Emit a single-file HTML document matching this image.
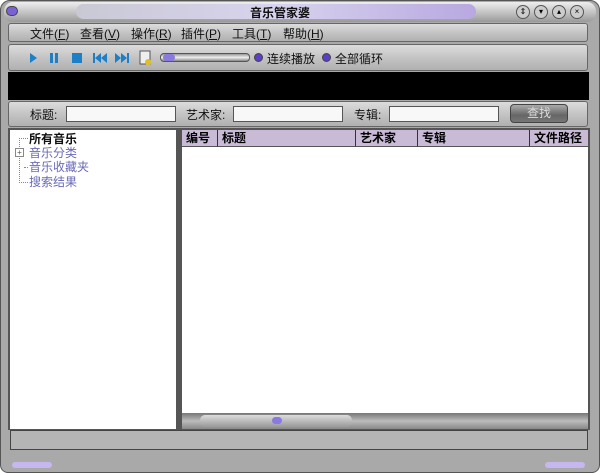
<!DOCTYPE html>
<html><head><meta charset="utf-8"><style>
*{margin:0;padding:0;box-sizing:border-box}
body{width:600px;height:473px;background:#fff;font-family:"Liberation Sans","Noto Sans CJK SC",sans-serif;font-size:12px;position:relative;overflow:hidden}
.a{position:absolute}
.win{left:0;top:0;width:600px;height:473px;background:#a9a9a9;border:1px solid #555;border-radius:10px 10px 8px 8px}
.bar{background:linear-gradient(#dcdcdc,#c4c4c4 50%,#b0b0b0);border:1px solid #666;border-radius:3px}
.inp{background:#f8f8f8;border:1px solid #555;height:16px}
.t{color:#111;font-size:12px;white-space:nowrap;line-height:14px}
.hd{background:#c9bad6;border-right:1px solid #333;border-bottom:1px solid #555;height:17px;font-weight:bold;padding-left:4px;font-size:12px;line-height:17px}
.lv{color:#6a6ab8}
</style></head><body>
<div class="a win"></div>
<div class="a" style="left:4px;top:2px;width:592px;height:20px;border-radius:9px;background:linear-gradient(#eee,#bdbdbd 60%,#999)"></div>
<div class="a" style="left:76px;top:4px;width:400px;height:15px;border-radius:8px;background:linear-gradient(90deg,#c9c9d4,#d8d3ee 50%,#b8a8e0)"></div>
<div class="a" style="left:6px;top:6px;width:12px;height:10px;border-radius:6px;background:#7a62d6;border:1px solid #444"></div>
<div class="a t" style="left:250px;top:6px;font-weight:bold">音乐管家婆</div>
<div class="a" style="left:516px;top:5px;width:76px;height:14px;display:flex;gap:4px">
<span style="width:14px;height:14px;border-radius:7px;background:#ccc;border:1px solid #555;font-size:8px;text-align:center;line-height:12px">⇕</span><span style="width:14px;height:14px;border-radius:7px;background:#ccc;border:1px solid #555;font-size:8px;text-align:center;line-height:12px">▾</span><span style="width:14px;height:14px;border-radius:7px;background:#ccc;border:1px solid #555;font-size:8px;text-align:center;line-height:12px">▴</span><span style="width:14px;height:14px;border-radius:7px;background:#ccc;border:1px solid #555;font-size:8px;text-align:center;line-height:12px">×</span></div>
<div class="a bar" style="left:8px;top:23px;width:580px;height:19px"></div>
<div class="a t" style="left:30px;top:27px">文件(<u>F</u>)</div>
<div class="a t" style="left:80px;top:27px">查看(<u>V</u>)</div>
<div class="a t" style="left:131px;top:27px">操作(<u>R</u>)</div>
<div class="a t" style="left:181px;top:27px">插件(<u>P</u>)</div>
<div class="a t" style="left:232px;top:27px">工具(<u>T</u>)</div>
<div class="a t" style="left:283px;top:27px">帮助(<u>H</u>)</div>
<div class="a bar" style="left:8px;top:44px;width:580px;height:27px"></div>
<svg class="a" style="left:26px;top:50px" width="150" height="16" fill="#1d7fc6">
<path d="M4 3 L11 8 L4 13Z"/>
<rect x="24" y="3" width="3" height="10"/><rect x="29" y="3" width="3" height="10"/>
<rect x="46" y="3" width="10" height="10"/>
<rect x="67" y="3" width="2" height="10"/><path d="M75 3 L69 8 L75 13Z M81 3 L75 8 L81 13Z"/>
<path d="M89 3 L95 8 L89 13Z M95 3 L101 8 L95 13Z"/><rect x="101" y="3" width="2" height="10"/>
<rect x="114" y="1" width="10" height="13" fill="#eee" stroke="#555"/><circle cx="122" cy="12" r="3" fill="#e0c020"/>
</svg>
<div class="a" style="left:160px;top:53px;width:90px;height:9px;background:linear-gradient(#999,#eee,#888);border:1px solid #555;border-radius:4px"></div>
<div class="a" style="left:163px;top:54px;width:12px;height:7px;background:#8b78e0;border-radius:4px"></div>
<div class="a" style="left:254px;top:53px;width:9px;height:9px;border-radius:5px;background:#5b3fc8;border:1px solid #444"></div>
<div class="a t" style="left:267px;top:52px">连续播放</div>
<div class="a" style="left:322px;top:53px;width:9px;height:9px;border-radius:5px;background:#5b3fc8;border:1px solid #444"></div>
<div class="a t" style="left:335px;top:52px">全部循环</div>
<div class="a" style="left:8px;top:72px;width:581px;height:28px;background:#000"></div>
<div class="a bar" style="left:8px;top:101px;width:580px;height:26px"></div>
<div class="a t" style="left:30px;top:108px">标题:</div>
<div class="a inp" style="left:66px;top:106px;width:110px"></div>
<div class="a t" style="left:186px;top:108px">艺术家:</div>
<div class="a inp" style="left:233px;top:106px;width:110px"></div>
<div class="a t" style="left:354px;top:108px">专辑:</div>
<div class="a inp" style="left:389px;top:106px;width:110px"></div>
<div class="a" style="left:510px;top:104px;width:58px;height:19px;border-radius:4px;background:linear-gradient(#aaa,#666 60%,#777);border:1px solid #444;color:#ddd;text-align:center;line-height:17px">查找</div>
<div class="a" style="left:8px;top:128px;width:582px;height:302px;background:#555"></div>
<div class="a" style="left:10px;top:130px;width:166px;height:299px;background:#fff"></div>
<div class="a" style="left:182px;top:130px;width:406px;height:283px;background:#fff"></div>
<div class="a" style="left:19px;top:138px;width:1px;height:45px;border-left:1px dotted #888"></div>
<div class="a" style="left:19px;top:138px;width:9px;border-top:1px dotted #888"></div>
<div class="a" style="left:24px;top:167px;width:4px;border-top:1px dotted #888"></div>
<div class="a" style="left:19px;top:182px;width:9px;border-top:1px dotted #888"></div>
<div class="a t" style="left:29px;top:132px;font-weight:bold">所有音乐</div>
<div class="a" style="left:15px;top:148px;width:9px;height:9px;border:1px solid #888;background:#fff;font-size:8px;line-height:7px;text-align:center;color:#555">+</div>
<div class="a t lv" style="left:29px;top:146px">音乐分类</div>
<div class="a t lv" style="left:29px;top:160px">音乐收藏夹</div>
<div class="a t lv" style="left:29px;top:175px">搜索结果</div>
<div class="a" style="left:182px;top:130px;width:406px;display:flex">
<div class="hd" style="width:36px">编号</div><div class="hd" style="width:138px">标题</div><div class="hd" style="width:62px">艺术家</div><div class="hd" style="width:112px">专辑</div><div class="hd" style="width:58px;border-right:0">文件路径</div></div>
<div class="a" style="left:182px;top:413px;width:406px;height:16px;background:linear-gradient(#777,#bbb,#888)"></div>
<div class="a" style="left:200px;top:415px;width:152px;height:12px;border-radius:5px;background:linear-gradient(#ddd,#999)"></div>
<div class="a" style="left:272px;top:417px;width:10px;height:7px;border-radius:4px;background:#8b78e0"></div>
<div class="a" style="left:10px;top:430px;width:578px;height:20px;background:#b5b5b5;border:1px solid #444"></div>
<div class="a" style="left:12px;top:462px;width:40px;height:6px;border-radius:3px;background:#c6b8ee"></div>
<div class="a" style="left:545px;top:462px;width:40px;height:6px;border-radius:3px;background:#c6b8ee"></div>
</body></html>
